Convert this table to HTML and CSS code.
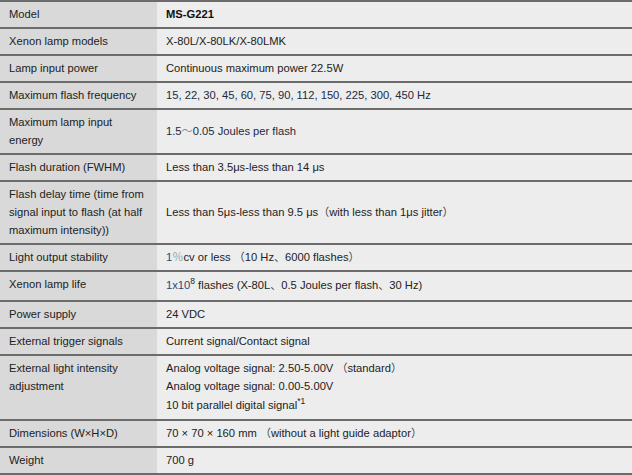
FILE: index.html
```html
<!DOCTYPE html>
<html lang="en">
<head>
<meta charset="utf-8">
<title>MS-G221 Specifications</title>
<link rel="stylesheet" href="styles.css">
</head>
<body>
<table class="spec">
  <tbody>
    <tr><th>Model</th><td><strong>MS-G221</strong></td></tr>
    <tr><th>Xenon lamp models</th><td>X-80L/X-80LK/X-80LMK</td></tr>
    <tr><th>Lamp input power</th><td>Continuous maximum power 22.5W</td></tr>
    <tr><th>Maximum flash frequency</th><td class="num">15, 22, 30, 45, 60, 75, 90, 112, 150, 225, 300, 450 Hz</td></tr>
    <tr><th>Maximum lamp input energy</th><td class="num">1.5<span class="tilde">～</span>0.05 Joules per flash</td></tr>
    <tr><th>Flash duration (FWHM)</th><td>Less than 3.5μs-less than 14 μs</td></tr>
    <tr><th>Flash delay time (time from signal input to flash (at half maximum intensity))</th><td>Less than 5μs-less than 9.5 μs<span class="cjk">（</span>with less than 1μs jitter<span class="cjk">）</span></td></tr>
    <tr><th>Light output stability</th><td><span class="blue">1</span><span class="pct">％</span>cv or less <span class="cjk">（</span>10 Hz<span class="cjk">、</span>6000 flashes<span class="cjk">）</span></td></tr>
    <tr><th>Xenon lamp life</th><td class="tall"><span class="blue">1x10</span><sup class="sup">8</sup> flashes (X-80L<span class="cjk">、</span>0.5 Joules per flash<span class="cjk">、</span>30 Hz)</td></tr>
    <tr><th>Power supply</th><td>24 VDC</td></tr>
    <tr><th>External trigger signals</th><td>Current signal/Contact signal</td></tr>
    <tr><th>External light intensity adjustment</th><td><div class="ln">Analog voltage signal: 2.50-5.00V <span class="cjk">（</span>standard<span class="cjk">）</span></div><div class="ln">Analog voltage signal: 0.00-5.00V</div><div class="ln ln-sup">10 bit parallel digital signal<sup class="sup">*1</sup></div></td></tr>
    <tr><th>Dimensions (W×H×D)</th><td>70 × 70 × 160 mm <span class="cjk">（</span>without a light guide adaptor<span class="cjk">）</span></td></tr>
    <tr><th>Weight</th><td>700 g</td></tr>
  </tbody>
</table>
</body>
</html>
```

FILE: styles.css
```css
html, body {
  margin: 0;
  padding: 0;
  background: #ededed;
}

.spec {
  width: 100%;
  border-collapse: collapse;
  table-layout: fixed;
  font-family: "Liberation Sans", Arial, "Noto Sans CJK SC", sans-serif;
  font-size: 11.2px;
  line-height: 18px;
  color: #222;
}

.spec th,
.spec td {
  border-top: 2px solid #6b6b6b;
  border-bottom: 2px solid #6b6b6b;
  padding: 3px 9px 4px 9px;
  text-align: left;
}

.spec th {
  width: 138px;
  padding-right: 10px;
  background: #d9d9d9;
  font-weight: normal;
  vertical-align: top;
}

.spec td {
  background: #ededed;
  vertical-align: middle;
}

.spec strong {
  font-weight: bold;
  color: #111;
}

.cjk {
  font-family: "Noto Sans CJK SC", sans-serif;
  font-size: 11px;
  line-height: 0;
  color: #444;
}

.tilde {
  font-family: "Noto Sans CJK SC", sans-serif;
  line-height: 0;
  color: #8a8a8a;
}

.blue {
  color: #1f4a7a;
}

.pct {
  font-family: "Noto Sans CJK SC", sans-serif;
  line-height: 0;
  color: #9aa5b0;
}

.num {
  color: #1d2a40;
}

.tall {
  line-height: 21px;
}

.sup {
  font-size: 8.5px;
  line-height: 0;
  vertical-align: 5px;
}

.ln-sup {
  line-height: 20px;
}
```
